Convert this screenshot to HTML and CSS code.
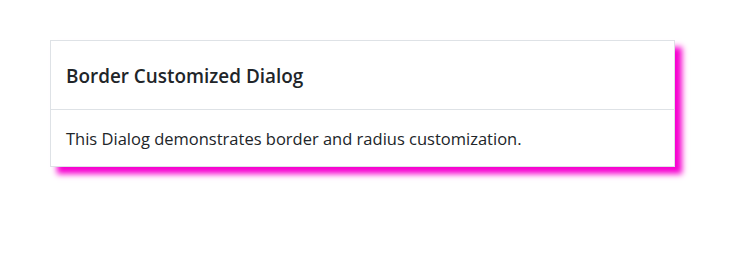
FILE: index.html
```html
<!DOCTYPE html>
<html>
<head>
<meta charset="utf-8">
<link rel="stylesheet" href="styles.css">
</head>
<body>
<div class="page">
  <div class="dialog">
    <div class="dialog-header"><h5 class="dialog-title">Border Customized Dialog</h5></div>
    <div class="dialog-body">This Dialog demonstrates border and radius customization.</div>
  </div>
</div>
</body>
</html>
```

FILE: styles.css
```css
html, body {
  margin: 0;
  padding: 0;
  background: #ffffff;
}
body {
  min-height: 100vh;
}
.page {
  padding: 40px 0 40px 50px;
}
.dialog {
  width: 623px;
  border: 1px solid #dee2e6;
  background: #fff;
  box-shadow: 7px 7px 6px #f700d0;
  font-family: "Open Sans", "Noto Sans", sans-serif;
  color: #212529;
}
.dialog-header {
  height: 69px;
  display: flex;
  align-items: center;
  padding: 2px 15px 0;
  box-sizing: border-box;
  border-bottom: 1px solid #dee2e6;
}
.dialog-title {
  margin: 0;
  font-size: 18.9px;
  font-weight: 600;
}
.dialog-body {
  height: 56px;
  display: flex;
  align-items: center;
  padding: 0 15px;
  font-size: 16.5px;
}
```
